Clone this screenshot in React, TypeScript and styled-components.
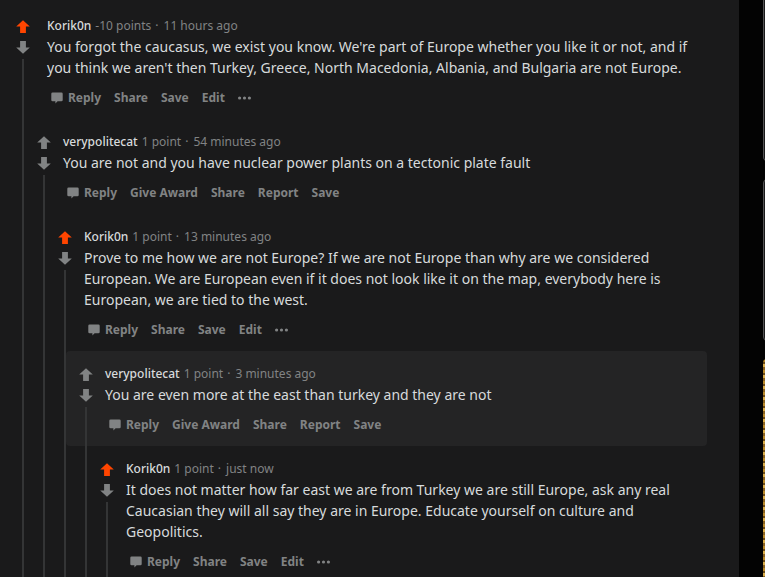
import React from 'react';
import styled, { createGlobalStyle } from 'styled-components';

// 评论数据
interface CommentData {
  author: string;
  points: string;
  time: string;
  body: string;
  upvoted?: boolean;
  highlight?: boolean;
  own?: boolean;
  replies?: CommentData[];
}

const textColor = '#d7dadc';
const metaColor = '#818384';
const lineColor = '#343536';
const upvoteColor = '#ff4500';

const GlobalStyle = createGlobalStyle`
  html, body {
    margin: 0;
    padding: 0;
    background: #030303;
    overflow: hidden;
  }
  body {
    font-family: "Noto Sans", "Open Sans", sans-serif;
  }
`;

const Page = styled.div`
  display: flex;
  align-items: stretch;
  gap: 24px;
  min-height: 100vh;
`;

const Thread = styled.main`
  width: 739px;
  flex-shrink: 0;
  box-sizing: border-box;
  padding: 3px 32px 0 12px;
  background: #1a1a1b;
  min-height: 100vh;
`;

const Sidebar = styled.aside`
  width: 312px;
  flex-shrink: 0;
  display: flex;
  flex-direction: column;
  gap: 18px;
`;

const SideCard = styled.div<{ $h: number; $first?: boolean }>`
  height: ${p => p.$h}px;
  box-sizing: border-box;
  background: #1a1a1b;
  border: 1px solid #525253;
  border-top: ${p => (p.$first ? 'none' : '1px solid #525253')};
  border-radius: ${p => (p.$first ? '0 0 4px 4px' : '4px')};
`;

const SideImage = styled.div`
  flex: 1;
  min-height: 240px;
  border-radius: 4px 4px 0 0;
  background: repeating-linear-gradient(
    180deg,
    #b8892a 0 3px,
    #6b4a16 3px 5px,
    #d9ad4a 5px 8px,
    #8a6220 8px 11px
  );
`;

const CommentWrap = styled.div`
  display: flex;
  flex-direction: column;
`;

const SelfRow = styled.div<{ $highlight?: boolean }>`
  display: flex;
  align-items: stretch;
  ${p =>
    p.$highlight
      ? `
    margin-left: -9px;
    padding-left: 9px;
    background: #242425;
    border-radius: 4px;
  `
      : ''}
`;

const Gutter = styled.div<{ $top?: boolean }>`
  width: 21px;
  flex-shrink: 0;
  display: flex;
  flex-direction: column;
  align-items: center;
  padding-top: ${p => (p.$top ? '15px' : '0')};
`;

const VoteButton = styled.div<{ $down?: boolean }>`
  width: 21px;
  height: 16px;
  display: flex;
  align-items: center;
  justify-content: center;
  margin-top: ${p => (p.$down ? '5px' : '0')};
`;

const ThreadLine = styled.div<{ $gap?: boolean }>`
  width: 2px;
  flex: 1;
  margin-top: ${p => (p.$gap ? '4px' : '0')};
  background: ${lineColor};
`;

const Content = styled.div<{ $root?: boolean }>`
  flex: 1;
  min-width: 0;
  padding: 15px 8px 9px ${p => (p.$root ? '14px' : '9px')};
`;

const Meta = styled.div`
  font-size: 12px;
  line-height: 16px;
  color: ${metaColor};
  white-space: nowrap;
`;

const Author = styled.span`
  color: ${textColor};
  font-weight: 500;
  margin-right: 4px;
`;

const Dot = styled.span`
  margin: 0 5px 0 4px;
`;

const Body = styled.p`
  margin: 2px 0 0;
  font-size: 14px;
  line-height: 21px;
  color: ${textColor};
`;

const Actions = styled.div`
  display: flex;
  align-items: center;
  gap: 5px;
  margin-top: 8px;
  height: 24px;
`;

const ActionButton = styled.span`
  display: flex;
  align-items: center;
  gap: 5px;
  height: 24px;
  padding: 0 4px;
  font-size: 12px;
  font-weight: 700;
  line-height: 16px;
  color: ${metaColor};
`;

const Replies = styled.div`
  display: flex;
  align-items: stretch;
`;

const ReplyList = styled.div`
  flex: 1;
  min-width: 0;
`;

const Arrow = ({ color, down }: { color: string; down?: boolean }) => (
  <svg width="14" height="13" viewBox="0 0 14 13" style={{ transform: down ? 'rotate(180deg)' : undefined }}>
    <path d="M7 0.2 L13.8 6.4 L9.9 6.4 L9.9 13 L4.1 13 L4.1 6.4 L0.2 6.4 Z" fill={color} />
  </svg>
);

const ChatIcon = () => (
  <svg width="12" height="12" viewBox="0 0 12 12">
    <path d="M1.6 0.5 H10.4 A1.3 1.3 0 0 1 11.7 1.8 V7.9 A1.3 1.3 0 0 1 10.4 9.2 H6.6 L4.4 11.6 V9.2 H1.6 A1.3 1.3 0 0 1 0.3 7.9 V1.8 A1.3 1.3 0 0 1 1.6 0.5 Z" fill={metaColor} />
  </svg>
);

const MoreIcon = () => (
  <svg width="13" height="4" viewBox="0 0 13 4">
    <circle cx="1.6" cy="2" r="1.6" fill={metaColor} />
    <circle cx="6.5" cy="2" r="1.6" fill={metaColor} />
    <circle cx="11.4" cy="2" r="1.6" fill={metaColor} />
  </svg>
);

const thread: CommentData = {
  author: 'Korik0n',
  points: '-10 points',
  time: '11 hours ago',
  upvoted: true,
  own: true,
  body: "You forgot the caucasus, we exist you know. We're part of Europe whether you like it or not, and if you think we aren't then Turkey, Greece, North Macedonia, Albania, and Bulgaria are not Europe.",
  replies: [
    {
      author: 'verypolitecat',
      points: '1 point',
      time: '54 minutes ago',
      body: 'You are not and you have nuclear power plants on a tectonic plate fault',
      replies: [
        {
          author: 'Korik0n',
          points: '1 point',
          time: '13 minutes ago',
          upvoted: true,
          own: true,
          body: 'Prove to me how we are not Europe? If we are not Europe than why are we considered European. We are European even if it does not look like it on the map, everybody here is European, we are tied to the west.',
          replies: [
            {
              author: 'verypolitecat',
              points: '1 point',
              time: '3 minutes ago',
              highlight: true,
              body: 'You are even more at the east than turkey and they are not',
              replies: [
                {
                  author: 'Korik0n',
                  points: '1 point',
                  time: 'just now',
                  upvoted: true,
                  own: true,
                  body: 'It does not matter how far east we are from Turkey we are still Europe, ask any real Caucasian they will all say they are in Europe. Educate yourself on culture and Geopolitics.',
                },
              ],
            },
          ],
        },
      ],
    },
  ],
};

const Comment = ({ c, depth }: { c: CommentData; depth: number }) => {
  const actions = c.own ? ['Share', 'Save', 'Edit'] : ['Give Award', 'Share', 'Report', 'Save'];
  return (
    <CommentWrap>
      <SelfRow $highlight={c.highlight}>
        <Gutter $top>
          <VoteButton><Arrow color={c.upvoted ? upvoteColor : metaColor} /></VoteButton>
          <VoteButton $down><Arrow color={metaColor} down /></VoteButton>
          <ThreadLine $gap />
        </Gutter>
        <Content $root={depth === 0}>
          <Meta>
            <Author>{c.author}</Author>
            {c.points}
            <Dot>·</Dot>
            {c.time}
          </Meta>
          <Body>{c.body}</Body>
          <Actions>
            <ActionButton><ChatIcon />Reply</ActionButton>
            {actions.map(a => <ActionButton key={a}>{a}</ActionButton>)}
            {c.own && <ActionButton><MoreIcon /></ActionButton>}
          </Actions>
        </Content>
      </SelfRow>
      {c.replies && (
        <Replies>
          <Gutter><ThreadLine /></Gutter>
          <ReplyList>
            {c.replies.map((r, i) => <Comment key={i} c={r} depth={depth + 1} />)}
          </ReplyList>
        </Replies>
      )}
    </CommentWrap>
  );
};

export default function App() {
  return (
    <>
      <GlobalStyle />
      <Page>
        <Thread>
          <Comment c={thread} depth={0} />
        </Thread>
        <Sidebar>
          <SideCard $h={161} $first />
          <SideCard $h={162} />
          <SideImage />
        </Sidebar>
      </Page>
    </>
  );
}
